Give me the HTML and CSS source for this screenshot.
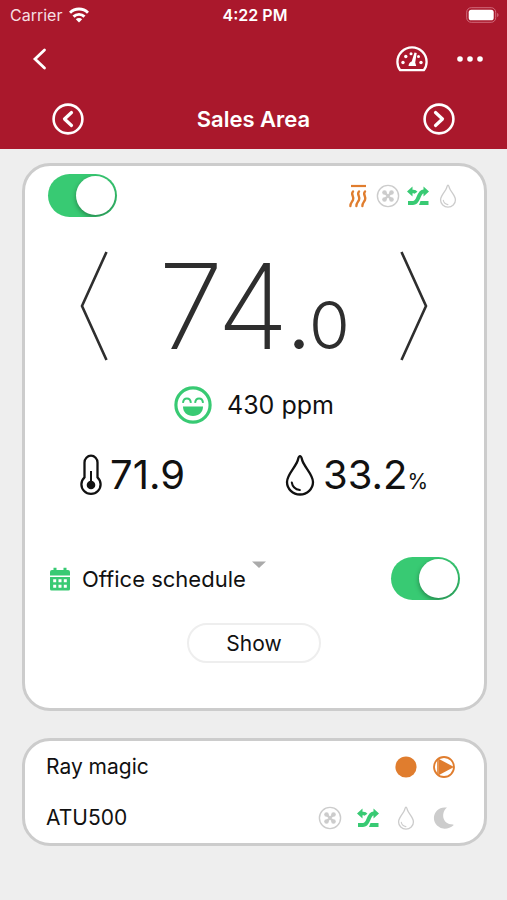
FILE: index.html
```html
<!DOCTYPE html>
<html lang="en">
<head>
<meta charset="utf-8">
<meta name="viewport" content="width=device-width, initial-scale=1">
<title>Sales Area</title>
<link rel="stylesheet" href="styles.css">
</head>
<body>
<svg class="sprite" aria-hidden="true">
  <symbol id="fan" viewBox="0 0 24 24">
    <circle cx="12" cy="12" r="10.600" fill="none" stroke="currentColor" stroke-width="1.400"/>
    <path d="M8 8l8 8M16 8l-8 8" stroke="currentColor" stroke-width="2.400"/>
    <circle cx="8.500" cy="8.500" r="2.300" fill="currentColor"/><circle cx="15.500" cy="8.500" r="2.300" fill="currentColor"/>
    <circle cx="8.500" cy="15.500" r="2.300" fill="currentColor"/><circle cx="15.500" cy="15.500" r="2.300" fill="currentColor"/>
  </symbol>
  <symbol id="airflow" viewBox="0 0 24 24">
    <path d="M2 19h5c3 0 4-2 5.200-5s2.500-6.500 5.300-6.500h1" fill="none" stroke="currentColor" stroke-width="4"/>
    <path d="M17.500 2.500l5.500 5-5.500 5zM6.500 2.500l-5.500 5 5.500 5zM14.500 17h8v4h-9.500z" fill="currentColor"/>
    <path d="M5 7.500h2.500c1 0 2 .5 2.500 1.200" fill="none" stroke="currentColor" stroke-width="3.600"/>
  </symbol>
  <symbol id="drop" viewBox="0 0 30 42">
    <path d="M15 2.200C13.500 2.200 13.400 4.500 12.500 7 10 14 2 20.500 2 28a13 12.500 0 0 0 26 0C28 20.500 20 14 17.500 7c-.9-2.500-1-4.800-2.500-4.800z" fill="none" stroke="currentColor" stroke-width="2.300"/>
    <path d="M6.800 28.500c.6 4 3.400 6.800 8 7.500" fill="none" stroke="currentColor" stroke-width="2" stroke-linecap="round"/>
  </symbol>
  <symbol id="chevron-left" viewBox="0 0 32 32">
    <circle cx="16" cy="16" r="14.400" fill="none" stroke="currentColor" stroke-width="2.600"/>
    <path d="M19.500 9.500L12.500 16l7 6.500" fill="none" stroke="currentColor" stroke-width="3.200" stroke-linecap="round" stroke-linejoin="round"/>
  </symbol>
</svg>

<header class="header">
  <div class="status">
    <span class="carrier">Carrier
      <svg class="wifi" viewBox="0 0 20 16" aria-hidden="true"><g fill="none" stroke="currentColor" stroke-width="2.900"><path d="M1 5.800a12.700 12.700 0 0 1 18 0"/><path d="M4.500 9.600a7.800 7.800 0 0 1 11 0"/></g><path d="M6.800 12.200a4.600 4.600 0 0 1 6.400 0L10 15.600z" fill="currentColor"/></svg>
    </span>
    <time class="clock">4:22 PM</time>
    <svg class="battery" viewBox="0 0 34 16" aria-hidden="true"><rect x=".7" y=".7" width="29" height="14.600" rx="4.500" fill="none" stroke="#d0697a"/><rect x="2.700" y="2.700" width="25" height="10.600" rx="2.600" fill="#fff"/><path d="M31.200 6c1.700.5 1.700 3.500 0 4z" fill="#d0697a"/></svg>
  </div>
  <nav class="nav">
    <button class="icon-button" aria-label="Back"><svg class="back" viewBox="0 0 16 24"><path d="M12.500 3L3 12l9.500 9" fill="none" stroke="currentColor" stroke-width="2.800" stroke-linecap="round"/></svg></button>
    <div class="nav-actions">
      <button class="icon-button" aria-label="Dashboard"><svg class="gauge" viewBox="0 0 32 26"><path d="M4.200 24.200C2 21.500 1.400 19 1.400 16a14.600 14.600 0 0 1 29.200 0c0 3-.6 5.500-2.800 8.200z" fill="none" stroke="currentColor" stroke-width="2.300" stroke-linejoin="round"/><g fill="currentColor"><circle cx="7" cy="16.500" r="1.700"/><circle cx="9.800" cy="10.500" r="1.700"/><circle cx="15" cy="7.700" r="1.500"/><circle cx="22.500" cy="10.500" r="1.500"/><circle cx="25" cy="16.500" r="1.700"/><path d="M18.500 6.500l2.200.6-1.500 9.400 1 3.500H12.500c.3-2.600 1.500-4 3.200-4.500z"/></g></svg></button>
      <button class="icon-button" aria-label="More"><svg class="more" viewBox="0 0 28 8" fill="currentColor"><circle cx="4" cy="4" r="2.800"/><circle cx="14" cy="4" r="2.800"/><circle cx="24" cy="4" r="2.800"/></svg></button>
    </div>
  </nav>
  <div class="zone-bar">
    <button class="icon-button" aria-label="Previous area"><svg class="round"><use href="#chevron-left"/></svg></button>
    <h1 class="title">Sales Area</h1>
    <button class="icon-button" aria-label="Next area"><svg class="round flip"><use href="#chevron-left"/></svg></button>
  </div>
</header>

<main class="content">
  <section class="card zone">
    <div class="row">
      <input class="toggle" type="checkbox" checked aria-label="Zone power">
      <div class="icons">
        <svg class="icon orange" viewBox="0 0 24 24" fill="none" stroke="currentColor"><path d="M5 2h15" stroke-width="2.200"/><path stroke-width="2.400" stroke-linecap="round" d="M7 7.500c-2.800 3 1.600 5 0 8.500-.8 1.700-3 3.500-2.600 6M13 7.500c-2.800 3 1.600 5 0 8.500-.8 1.700-3 3.500-2.600 6M19 7.500c-2.800 3 1.600 5 0 8.500-.8 1.700-3 3.500-2.600 6"/></svg>
        <svg class="icon gray"><use href="#fan"/></svg>
        <svg class="icon green"><use href="#airflow"/></svg>
        <svg class="icon gray"><use href="#drop"/></svg>
      </div>
    </div>

    <div class="setpoint">
      <button class="icon-button" aria-label="Decrease"><svg class="arrow" viewBox="0 0 28 110"><path d="M26.500 1L2 55l24.500 54" fill="none" stroke="currentColor" stroke-width="2.600"/></svg></button>
      <output class="target">74<span class="decimal"><span class="dot">.</span>0</span></output>
      <button class="icon-button" aria-label="Increase"><svg class="arrow flip" viewBox="0 0 28 110"><path d="M26.500 1L2 55l24.500 54" fill="none" stroke="currentColor" stroke-width="2.600"/></svg></button>
    </div>

    <div class="air">
      <svg class="smile green" viewBox="0 0 36 36" aria-hidden="true"><circle cx="18" cy="18" r="16.200" fill="none" stroke="currentColor" stroke-width="3"/><path d="M8.500 19.500h19c0 5.500-4 9-9.500 9s-9.500-3.500-9.500-9z" fill="currentColor"/><path d="M8.500 16c.6-5.500 6.900-5.500 7.500 0M20 16c.6-5.500 6.900-5.500 7.500 0" fill="none" stroke="currentColor" stroke-width="1.900"/></svg>
      <span>430 ppm</span>
    </div>

    <div class="readings">
      <div class="reading">
        <svg class="thermometer" viewBox="0 0 22 42" aria-hidden="true"><path d="M4.500 8.500a6.500 6.800 0 0 1 13 0v14.800a9.600 9.600 0 1 1-13 0z" fill="none" stroke="currentColor" stroke-width="2.300"/><path d="M11 17v14" stroke="currentColor" stroke-width="2"/><circle cx="11" cy="31" r="4.300" fill="currentColor"/></svg>
        <span>71.9</span>
      </div>
      <div class="reading">
        <svg class="humidity" aria-hidden="true"><use href="#drop"/></svg>
        <span>33.2<small class="unit">%</small></span>
      </div>
    </div>

    <div class="row schedule">
      <div class="picker">
        <svg class="calendar green" viewBox="0 0 22 24" aria-hidden="true"><path d="M1 8.500V5a2 2 0 0 1 2-2h1.500V.8h3V3h7V.8h3V3H19a2 2 0 0 1 2 2v3.500zM1 10h20v12a1.500 1.500 0 0 1-1.500 1.500h-17A1.500 1.500 0 0 1 1 22z" fill="currentColor"/><g fill="#fff"><path d="M4.200 12.200h3v3h-3zM9.500 12.200h3v3h-3zM14.800 12.200h3v3h-3zM4.200 17.700h3v3h-3zM9.500 17.700h3v3h-3zM14.800 17.700h3v3h-3z"/></g></svg>
        <select class="select" aria-label="Schedule"><option>Office schedule</option></select>
        <svg class="caret" viewBox="0 0 14 8" aria-hidden="true"><path d="M0 .5h14L7 7z" fill="#aaa"/></svg>
      </div>
      <input class="toggle" type="checkbox" checked aria-label="Schedule enabled">
    </div>

    <button class="show">Show</button>
  </section>

  <section class="card devices">
    <div class="device">
      <span>Ray magic</span>
      <div class="icons">
        <svg class="icon orange" viewBox="0 0 24 24"><circle cx="12" cy="12" r="10.600" fill="currentColor"/></svg>
        <svg class="icon orange" viewBox="0 0 24 24"><circle cx="12" cy="12" r="10" fill="none" stroke="currentColor" stroke-width="1.800"/><path d="M6 4v16" stroke="currentColor" stroke-width="1.600"/><path d="M7 4L22 12 7 20z" fill="currentColor"/></svg>
      </div>
    </div>
    <div class="device">
      <span>ATU500</span>
      <div class="icons">
        <svg class="icon gray"><use href="#fan"/></svg>
        <svg class="icon green"><use href="#airflow"/></svg>
        <svg class="icon gray"><use href="#drop"/></svg>
        <svg class="icon gray" viewBox="0 0 24 24"><path d="M15 1.500C9 6 9.500 18.500 21 18.500q.8 0 .5.800C19 21.500 16 22.700 12.500 22.700A10.600 10.600 0 0 1 12.500 1.500z" fill="currentColor"/></svg>
      </div>
    </div>
  </section>
</main>
</body>
</html>
```

FILE: styles.css
```css
* { box-sizing: border-box; }

body {
  margin: 0;
  min-height: 100vh;
  background: #eee;
  color: #111;
  font-family: Inter, "Liberation Sans", sans-serif;
  font-size: 21px;
}

svg { display: block; flex: none; }
.sprite { position: absolute; width: 0; height: 0; }
button, select { font: inherit; color: inherit; }

.icon-button {
  padding: 0;
  border: 0;
  background: none;
  cursor: pointer;
}

.flip { transform: scaleX(-1); }
.green { color: #38ca73; }
.orange { color: #e07d2e; }
.gray { color: #ccc; }

/* Header */
.header { background: #aa182c; color: #fff; }

.status {
  display: grid;
  grid-template-columns: 1fr auto 1fr;
  align-items: center;
  height: 30px;
  padding: 0 7px 0 10px;
  font-size: 16px;
}

.carrier { display: flex; align-items: center; gap: 7px; color: #f6dfe2; }
.wifi { width: 20px; height: 16px; color: #fff; }
.clock { font-weight: 600; }
.battery { width: 34px; height: 16px; justify-self: end; }

.nav {
  display: flex;
  justify-content: space-between;
  align-items: center;
  height: 58px;
  padding: 0 23px 0 32px;
}

.nav-actions { display: flex; align-items: center; gap: 28px; }
.back { width: 16px; height: 24px; }
.gauge { width: 32px; height: 26px; }
.more { width: 28px; height: 8px; }

.zone-bar {
  display: flex;
  justify-content: space-between;
  align-items: center;
  height: 61px;
  padding: 0 52px;
}

.round { width: 32px; height: 32px; }
.title { margin: 0; font-size: 22px; font-weight: 600; }

/* Cards */
.content {
  display: flex;
  flex-direction: column;
  gap: 27px;
  padding: 14px 20px 24px 22px;
}

.card {
  border: 3px solid #ccc;
  border-radius: 28px;
  background: #fff;
}

.zone {
  display: flex;
  flex-direction: column;
  padding: 8px 24px 45px 23px;
}

.row { display: flex; justify-content: space-between; align-items: center; }
.icons { display: flex; gap: 6px; }
.icon { width: 24px; height: 24px; }

.toggle {
  appearance: none;
  width: 69px;
  height: 43px;
  margin: 0;
  padding: 2px;
  border-radius: 22px;
  background: #ccc;
  overflow: hidden;
  cursor: pointer;
}

.toggle::before {
  content: "";
  display: block;
  width: 39px;
  height: 39px;
  border-radius: 50%;
  background: #fff;
}

.toggle:checked { background: #38ca73; }

.toggle:checked::before {
  margin-left: auto;
  box-shadow: 0 2px 5px rgba(0, 0, 0, .35);
}

.setpoint {
  display: flex;
  justify-content: space-between;
  align-items: center;
  margin-top: 34px;
  padding: 0 32px;
  color: #2e2e2e;
}

.arrow { width: 28px; height: 110px; }

.target {
  font-size: 118px;
  font-weight: 200;
  line-height: 110px;
}

.decimal { font-size: 66px; font-weight: 300; line-height: 1; }
.dot { font-weight: 500; }

.air {
  display: flex;
  justify-content: center;
  align-items: center;
  gap: 15px;
  margin-top: 25px;
  font-size: 25px;
}

.smile { width: 38px; height: 38px; }

.readings {
  display: flex;
  justify-content: space-between;
  margin-top: 30px;
  padding: 0 32px;
  font-size: 40px;
  line-height: 42px;
}

.reading { display: flex; align-items: center; gap: 8px; }
.thermometer { width: 22px; height: 42px; }
.humidity { width: 30px; height: 42px; }
.unit { font-size: 21px; line-height: 1; }

.schedule { margin-top: 61px; }
.picker { display: flex; align-items: center; gap: 10px; }
.calendar { width: 24px; height: 24px; }

.select {
  appearance: none;
  padding: 0;
  border: 0;
  background: none;
  font-size: 22px;
}

.caret { width: 14px; height: 8px; margin: 0 0 28px -4px; }

.show {
  align-self: center;
  width: 134px;
  height: 40px;
  margin-top: 23px;
  border: 2px solid #eee;
  border-radius: 20px;
  background: #fff;
  cursor: pointer;
}

.devices { padding: 0 28px 0 21px; }

.device {
  display: flex;
  justify-content: space-between;
  align-items: center;
  height: 51px;
}

.device .icons { gap: 14px; }
```
